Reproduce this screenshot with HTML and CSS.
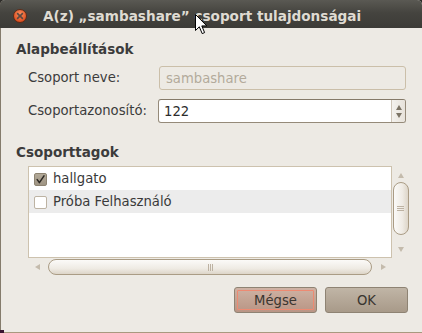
FILE: index.html
```html
<!DOCTYPE html>
<html lang="hu">
<head>
<meta charset="utf-8">
<title>A(z) „sambashare” csoport tulajdonságai</title>
<link rel="stylesheet" href="styles.css">
</head>
<body>
<div class="window">
  <div class="titlebar">
    <span class="close">
      <svg width="14" height="14" viewBox="0 0 14 14">
        <defs>
          <radialGradient id="cg" cx="50%" cy="35%" r="65%">
            <stop offset="0" stop-color="#f98d5d"/>
            <stop offset="1" stop-color="#d9481a"/>
          </radialGradient>
        </defs>
        <circle cx="7" cy="7" r="6.5" fill="url(#cg)" stroke="#5a2a18" stroke-width="1"/>
        <path d="M4.6 4.6 L9.4 9.4 M9.4 4.6 L4.6 9.4" stroke="#5b4a42" stroke-width="1.6" stroke-linecap="round"/>
      </svg>
    </span>
    <span class="title">A(z) „sambashare” csoport tulajdonságai</span>
    <svg class="cursor" width="14" height="22" viewBox="0 0 14 22">
      <path d="M0.5 0.5 L0.5 16.5 L4.3 12.8 L7.2 19.6 L9.6 18.6 L6.8 11.9 L11.8 11.9 Z" fill="#ffffff" stroke="#000000" stroke-width="1" stroke-linejoin="round"/>
    </svg>
  </div>

  <div class="content">
    <div class="heading">Alapbeállítások</div>
    <div class="form">
      <label class="label">Csoport neve:</label>
      <div class="entry entry-disabled">sambashare</div>
      <label class="label">Csoportazonosító:</label>
      <div class="entry entry-spin">
        <span class="spin-value">122</span>
        <span class="spin-buttons">
          <span class="spin-up"></span>
          <span class="spin-down"></span>
        </span>
      </div>
    </div>

    <div class="heading heading-members">Csoporttagok</div>
    <div class="scrolled">
      <div class="list">
        <div class="row">
          <span class="check check-on">
            <svg width="11" height="11" viewBox="0 0 11 11"><path d="M2.2 5.6 L4.4 8.6 L9 1.8" fill="none" stroke="#2b2722" stroke-width="1.5" stroke-linecap="round" stroke-linejoin="round"/></svg>
          </span>
          <span class="row-text">hallgato</span>
        </div>
        <div class="row row-alt">
          <span class="check"></span>
          <span class="row-text">Próba Felhasználó</span>
        </div>
      </div>
      <div class="vscroll">
        <span class="arrow arrow-up"></span>
        <span class="vthumb"><span class="vgrip"></span></span>
        <span class="arrow arrow-down"></span>
      </div>
      <div class="hscroll">
        <span class="arrow arrow-left"></span>
        <span class="hthumb"><span class="hgrip"></span></span>
        <span class="arrow arrow-right"></span>
      </div>
      <div class="corner"></div>
    </div>

    <div class="buttons">
      <button class="btn btn-cancel"><span class="focus">Mégse</span></button>
      <button class="btn btn-ok">OK</button>
    </div>
  </div>
  <span class="desk-corner"></span>
</div>
</body>
</html>
```

FILE: styles.css
```css
* { box-sizing: border-box; }

html, body {
  margin: 0;
  padding: 0;
}

body {
  width: 422px;
  height: 333px;
  overflow: hidden;
  background: #2e2d2a;
  font-family: "DejaVu Sans", "Liberation Sans", sans-serif;
  font-size: 13.2px;
  color: #3c3c3c;
}

.window {
  position: relative;
  width: 422px;
  height: 333px;
  background: #edeae4;
  border-left: 1px solid #857c6c;
  border-bottom: 1px solid #a8997f;
  border-radius: 5px 5px 0 0;
  display: flex;
  flex-direction: column;
}

.titlebar {
  position: relative;
  height: 28px;
  flex: none;
  margin-left: -1px;
  border-radius: 5px 5px 0 0;
  background: linear-gradient(#5a5953, #45443f 45%, #3c3b37);
  display: flex;
  align-items: center;
  padding-left: 13px;
}

.close {
  width: 14px;
  height: 14px;
  display: flex;
  margin-top: 3px;
}

.title {
  margin-left: 16px;
  margin-top: 3px;
  font-weight: bold;
  font-size: 13.6px;
  color: #dfdbd2;
  white-space: nowrap;
}

.cursor {
  position: absolute;
  left: 195px;
  top: 14px;
}

.content {
  flex: 1;
  display: flex;
  flex-direction: column;
  padding: 13px 14px 0 15px;
}

.heading {
  font-weight: bold;
  font-size: 13.5px;
  line-height: 16px;
  color: #3c3c3c;
}

.form {
  display: grid;
  grid-template-columns: 130px 248px;
  row-gap: 9px;
  margin: 9px 0 0 12px;
  align-items: center;
}

.label {
  line-height: 16px;
  color: #3c3c3c;
}

.entry {
  height: 24px;
  border-radius: 3px;
  display: flex;
  align-items: center;
}

.entry-disabled {
  border: 1px solid #cbbfa9;
  background: #edeae4;
  color: #b3aa9b;
  padding-left: 6px;
  margin-left: 1px;
}

.entry-spin {
  border: 1px solid #958a79;
  border-top-color: #857a69;
  background: #ffffff;
  color: #2c2c2c;
  padding-left: 5px;
  overflow: hidden;
}

.spin-value { flex: 1; }

.spin-buttons {
  width: 14px;
  height: 100%;
  border-left: 1px solid #cfc6b8;
  background: linear-gradient(90deg, #f4f2ee, #e7e2da);
  display: flex;
  flex-direction: column;
  align-items: center;
  justify-content: space-between;
  padding: 5px 0 4px;
}

.spin-up, .spin-down {
  width: 0;
  height: 0;
  border-left: 3px solid transparent;
  border-right: 3px solid transparent;
}

.spin-up { border-bottom: 5px solid #7c7465; }
.spin-down { border-top: 5px solid #7c7465; }

.heading-members {
  margin-top: 21px;
}

.scrolled {
  margin: 6px 0 0 12px;
  width: 382px;
  display: grid;
  grid-template-columns: 364px 18px;
  grid-template-rows: 92px 18px;
}

.list {
  border: 1px solid #cdc2ae;
  background: #ffffff;
  padding-top: 0;
}

.row {
  height: 23px;
  display: flex;
  align-items: center;
  padding-left: 5px;
}

.row-alt { background: #ececec; }

.check {
  width: 13px;
  height: 13px;
  border: 1px solid #bdb3a3;
  border-radius: 2px;
  background: #ffffff;
  display: flex;
  align-items: center;
  justify-content: center;
  margin-top: 1px;
}

.check-on {
  border-color: #8d8371;
  background: linear-gradient(#b2a998, #9e9483);
}

.row-text {
  margin-left: 6px;
  color: #3a3a3a;
  line-height: 16px;
}

.vscroll {
  display: flex;
  flex-direction: column;
  align-items: center;
  padding: 7px 0 6px;
}

.vthumb {
  width: 16px;
  height: 53px;
  margin: 4px 0 0 -1px;
  border: 1px solid #aa9c85;
  border-radius: 8px;
  background: linear-gradient(90deg, #fbfaf8, #efebe4 60%, #ddd5c8);
  display: flex;
  align-items: center;
  justify-content: center;
}

.vgrip {
  width: 7px;
  height: 5px;
  border-top: 1px solid #bdb2a2;
  border-bottom: 1px solid #bdb2a2;
  position: relative;
}

.vgrip::after {
  content: "";
  position: absolute;
  left: 0;
  right: 0;
  top: 1px;
  border-top: 1px solid #bdb2a2;
}

.arrow-up, .arrow-down, .arrow-left, .arrow-right {
  width: 0;
  height: 0;
}

.arrow-up {
  border-left: 3px solid transparent;
  border-right: 3px solid transparent;
  border-bottom: 5px solid #c4bbac;
}

.arrow-down {
  margin-top: auto;
  border-left: 3px solid transparent;
  border-right: 3px solid transparent;
  border-top: 5px solid #c4bbac;
}

.hscroll {
  display: flex;
  align-items: center;
  padding: 0 6px 0 7px;
}

.hthumb {
  width: 324px;
  height: 16px;
  margin: 0 0 0 8px;
  border: 1px solid #aa9c85;
  border-radius: 8px;
  background: linear-gradient(#fbfaf8, #efebe4 60%, #ddd5c8);
  display: flex;
  align-items: center;
  justify-content: center;
}

.hgrip {
  width: 5px;
  height: 7px;
  border-left: 1px solid #bdb2a2;
  border-right: 1px solid #bdb2a2;
  position: relative;
}

.hgrip::after {
  content: "";
  position: absolute;
  top: 0;
  bottom: 0;
  left: 1px;
  border-left: 1px solid #bdb2a2;
}

.arrow-left {
  border-top: 3px solid transparent;
  border-bottom: 3px solid transparent;
  border-right: 5px solid #c4bbac;
}

.arrow-right {
  margin-left: auto;
  border-top: 3px solid transparent;
  border-bottom: 3px solid transparent;
  border-left: 5px solid #c4bbac;
}

.buttons {
  display: flex;
  justify-content: flex-end;
  gap: 8px;
  margin-top: 11px;
  padding-right: 0;
}

.btn {
  width: 83px;
  height: 26px;
  border: 1px solid #8e8373;
  border-radius: 3px;
  font-family: "DejaVu Sans", "Liberation Sans", sans-serif;
  font-size: 13.2px;
  color: #3a3530;
  padding: 2px;
  display: flex;
  align-items: stretch;
  justify-content: center;
  cursor: default;
}

.btn-cancel {
  background: linear-gradient(#cfb2a4, #c2a292 55%, #b99585);
}

.btn-ok {
  background: linear-gradient(#c0b5a6, #b3a696 55%, #a89a89);
  align-items: center;
}

.focus {
  flex: 1;
  border: 1px solid #ee8a72;
  border-radius: 1px;
  display: flex;
  align-items: center;
  justify-content: center;
}

.desk-corner {
  position: absolute;
  left: -1px;
  bottom: -1px;
  width: 4px;
  height: 3px;
  background: #3b1630;
}
```
